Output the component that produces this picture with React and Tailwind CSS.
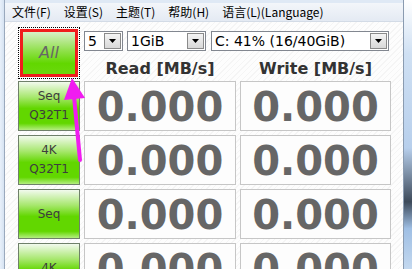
import React from "react";

const menus = ["文件(F)", "设置(S)", "主题(T)", "帮助(H)", "语言(L)(Language)"];

const rows = [
    { top: "Seq", bottom: "Q32T1" },
    { top: "4K", bottom: "Q32T1" },
    { top: "Seq", bottom: "" },
    { top: "4K", bottom: "" },
];

function DropButton() {
    return (
        <div className="flex h-[16px] w-[17px] items-center justify-center border border-[#8a8a8a] bg-[linear-gradient(to_bottom,#f4f4f4,#d8d8d8)]">
            <svg width="7" height="4" viewBox="0 0 7 4">
                <path d="M0 0 L7 0 L3.5 4 Z" fill="#000" />
            </svg>
        </div>
    );
}

function Select({ width, label }) {
    return (
        <div
            className={`flex h-[20px] items-center justify-between border border-[#828790] bg-white pl-[3px] pr-[1px] ${width}`}
        >
            <span className="text-[14px] leading-none text-black">{label}</span>
            <DropButton />
        </div>
    );
}

function GreenButton({ top, bottom }) {
    return (
        <div className="flex h-[50px] w-[62px] flex-col items-center justify-center border border-[#6f806a] bg-[linear-gradient(to_bottom,#f2faee_0%,#a6e76c_32%,#62d700_55%,#62d700_86%,#b4ee80_100%)] text-[12px] leading-[19px] text-[#3d3d3d]">
            <span>{top}</span>
            {bottom && <span>{bottom}</span>}
        </div>
    );
}

function ValueBox({ width }) {
    return (
        <div
            className={`flex h-[50px] items-center justify-center border border-[#c6c6c6] bg-[#fdfdfd] ${width}`}
        >
            <span className="pt-[1px] text-[40px] font-bold leading-none text-[#666]">0.000</span>
        </div>
    );
}

export default function App() {
    return (
        <div
            className="relative flex h-[269px] w-[412px] overflow-hidden bg-[#dfe9f5]"
            style={{ fontFamily: '"DejaVu Sans", Verdana, sans-serif' }}
        >
            <div className="w-[5px] shrink-0 border-r border-[#9aa9bd] bg-[linear-gradient(to_right,#e8f0fa,#d6e3f2)]" />
            <div className="flex w-[398px] shrink-0 flex-col pt-[3px]">
                <div
                    className="flex h-[25px] items-center gap-[11px] border-b border-[#d3dbe6] bg-[linear-gradient(to_bottom,#f3f6fa,#e4eaf3)] pl-[6px] text-[12px] text-black"
                    style={{ fontFamily: '"Noto Sans CJK SC", "Noto Sans", sans-serif' }}
                >
                    {menus.map((m) => (
                        <span key={m} className="px-[1px]">
                            {m}
                        </span>
                    ))}
                </div>
                <div className="flex-1 bg-[repeating-linear-gradient(135deg,#f5f5f5_0px,#f5f5f5_1px,#fdfdfd_1px,#fdfdfd_4px)] pl-[13px] pt-[5px]">
                    <div className="flex">
                        <div className="h-[52px] w-[62px] border border-dotted border-black p-[1px]">
                            <div className="flex h-full w-full items-center justify-center border-[3px] border-[#f01c1c] bg-[linear-gradient(to_bottom,#d8efc8_0%,#8fe04a_45%,#62d700_75%,#6ad80c_100%)]">
                                <span className="text-[16px] italic text-[#666]">All</span>
                            </div>
                        </div>
                        <div className="ml-[4px] flex flex-col pt-[4px]">
                            <div className="flex">
                                <Select width="w-[39px]" label="5" />
                                <div className="ml-[4px]">
                                    <Select width="w-[79px]" label="1GiB" />
                                </div>
                                <div className="ml-[5px]">
                                    <Select width="w-[178px]" label="C: 41% (16/40GiB)" />
                                </div>
                            </div>
                            <div className="mt-[8px] flex text-[16px] font-bold leading-[20px] text-[#333]">
                                <div className="w-[152px] text-center">Read [MB/s]</div>
                                <div className="ml-[4px] w-[151px] text-center">Write [MB/s]</div>
                            </div>
                        </div>
                    </div>
                    <div className="mt-[2px] flex flex-col gap-[4px]">
                        {rows.map((r, i) => (
                            <div key={i} className="flex gap-[4px]">
                                <GreenButton top={r.top} bottom={r.bottom} />
                                <ValueBox width="w-[152px]" />
                                <ValueBox width="w-[151px]" />
                            </div>
                        ))}
                    </div>
                </div>
            </div>
            <div className="w-[9px] shrink-0 border-l border-[#8a9bb0] bg-[linear-gradient(to_bottom,#ffffff_0%,#cfe0f3_20%,#b7cfec_55%,#3d4a5a_75%,#9fbfe4_85%,#c3d8ef_100%)]" />
            <svg className="pointer-events-none absolute left-0 top-0" width="412" height="269">
                <line x1="80" y1="160" x2="74" y2="96" stroke="#f01cf0" strokeWidth="4" strokeLinecap="round" />
                <path d="M72 78 L85 98 L64 100 Z" fill="#f01cf0" />
            </svg>
        </div>
    );
}
